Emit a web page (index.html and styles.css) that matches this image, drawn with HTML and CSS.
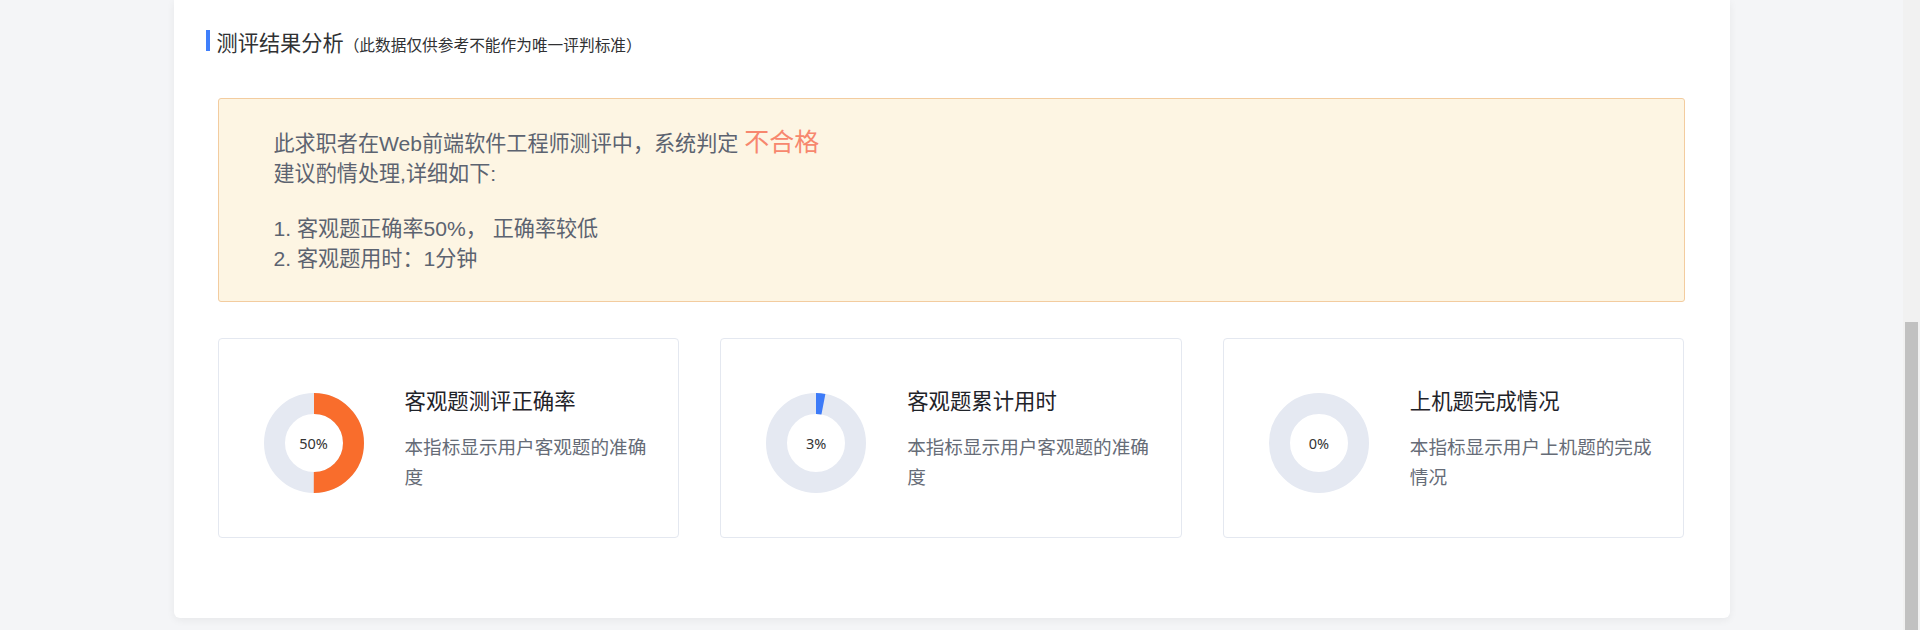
FILE: index.html
```html
<!DOCTYPE html>
<html lang="zh-CN">
<head>
    <meta charset="UTF-8">
    <meta name="viewport" content="width=device-width, initial-scale=1.0">
    <title>测评结果分析</title>
    <link rel="stylesheet" href="styles.css">
</head>
<body>
    <div class="page">
        <main class="report-panel">
            <h3 class="section-title">测评结果分析<span class="section-note">（此数据仅供参考不能作为唯一评判标准）</span></h3>
            <div class="section-body">
                <div class="verdict-box">
                    <p class="verdict-line">此求职者在Web前端软件工程师测评中，系统判定 <span class="verdict-result">不合格</span></p>
                    <p class="verdict-line">建议酌情处理,详细如下:</p>
                    <div class="verdict-list">
                        <p class="verdict-line">1. 客观题正确率50%， 正确率较低</p>
                        <p class="verdict-line">2. 客观题用时：1分钟</p>
                    </div>
                </div>

                <div class="stat-cards">
                    <div class="stat-card">
                        <div class="donut">
                            <svg width="100" height="100" viewBox="0 0 100 100">
                                <circle cx="50" cy="50" r="39.5" fill="none" stroke="#e5e9f2" stroke-width="21"/>
                                <circle cx="50" cy="50" r="39.5" fill="none" stroke="#f96d2c" stroke-width="21"
                                    stroke-dasharray="124.1 248.2" transform="rotate(-90 50 50)"/>
                            </svg>
                            <span class="donut-label">50%</span>
                        </div>
                        <div class="stat-info">
                            <h4>客观题测评正确率</h4>
                            <p>本指标显示用户客观题的准确度</p>
                        </div>
                    </div>
                    <div class="stat-card">
                        <div class="donut">
                            <svg width="100" height="100" viewBox="0 0 100 100">
                                <circle cx="50" cy="50" r="39.5" fill="none" stroke="#e5e9f2" stroke-width="21"/>
                                <circle cx="50" cy="50" r="39.5" fill="none" stroke="#3d7bf8" stroke-width="21"
                                    stroke-dasharray="7.45 248.2" transform="rotate(-90 50 50)"/>
                            </svg>
                            <span class="donut-label">3%</span>
                        </div>
                        <div class="stat-info">
                            <h4>客观题累计用时</h4>
                            <p>本指标显示用户客观题的准确度</p>
                        </div>
                    </div>
                    <div class="stat-card">
                        <div class="donut">
                            <svg width="100" height="100" viewBox="0 0 100 100">
                                <circle cx="50" cy="50" r="39.5" fill="none" stroke="#e5e9f2" stroke-width="21"/>
                            </svg>
                            <span class="donut-label">0%</span>
                        </div>
                        <div class="stat-info">
                            <h4>上机题完成情况</h4>
                            <p>本指标显示用户上机题的完成情况</p>
                        </div>
                    </div>
                </div>
            </div>
        </main>
    </div>
    <div class="scroll-track">
        <div class="scroll-thumb"></div>
    </div>
</body>
</html>
```

FILE: styles.css
```css
html, body {
    margin: 0;
    padding: 0;
    height: 630px;
    overflow: hidden;
}
body {
    display: flex;
    background-color: #f4f5f7;
    font-family: "Liberation Sans", "Noto Sans CJK SC", sans-serif;
}
.page {
    flex: 1;
    height: 630px;
    display: flex;
    justify-content: center;
    align-items: flex-end;
    padding-bottom: 12px;
    box-sizing: border-box;
}
.report-panel {
    width: 1556px;
    background-color: #fff;
    border-radius: 0 0 6px 6px;
    box-shadow: 0 2px 8px rgba(0, 0, 0, 0.06);
    padding: 30px 45px 80px 32px;
    box-sizing: border-box;
}
.section-title {
    margin: 0;
    height: 21px;
    line-height: 27px;
    border-left: 4px solid #3f7ffb;
    padding-left: 7px;
    font-size: 21.2px;
    font-weight: normal;
    color: #303133;
}
.section-note {
    font-size: 15.7px;
}
.section-body {
    margin: 47px 0 0 12px;
}

/* verdict box */
.verdict-box {
    background-color: #fdf5e3;
    border: 1px solid #f3cc9f;
    border-radius: 3px;
    padding: 30px 55px 27px;
    color: #5c6370;
    font-size: 21.1px;
    line-height: 30px;
}
.verdict-line {
    margin: 0;
}
.verdict-result {
    color: #f7876e;
    font-size: 25px;
    line-height: 1;
}
.verdict-list {
    margin-top: 25px;
}

/* stat cards */
.stat-cards {
    display: grid;
    grid-template-columns: repeat(3, 1fr);
    gap: 41px;
    margin-top: 36px;
}
.stat-card {
    height: 200px;
    box-sizing: border-box;
    border: 1px solid #e4e8f0;
    border-radius: 4px;
    display: flex;
    align-items: center;
    padding: 10px 28px 0 45px;
}
.donut {
    width: 100px;
    height: 100px;
    flex-shrink: 0;
    margin-right: 41px;
    display: grid;
    place-items: center;
}
.donut svg,
.donut-label {
    grid-area: 1 / 1;
}
.donut-label {
    font-family: "Noto Sans", sans-serif;
    font-size: 14.5px;
    color: #333;
}
.stat-info {
    flex: 1;
    margin-bottom: 5px;
}
.stat-info h4 {
    margin: 0;
    font-size: 21.4px;
    line-height: 28px;
    font-weight: normal;
    color: #1f2329;
}
.stat-info p {
    margin: 17px 0 0;
    font-size: 18.6px;
    line-height: 30px;
    color: #666c77;
}

/* page scrollbar, scrolled to the bottom */
.scroll-track {
    width: 17px;
    background-color: #f1f1f1;
    display: flex;
    flex-direction: column;
    justify-content: flex-end;
}
.scroll-thumb {
    height: 308px;
    margin: 0 2px;
    background-color: #c1c1c1;
}
```
